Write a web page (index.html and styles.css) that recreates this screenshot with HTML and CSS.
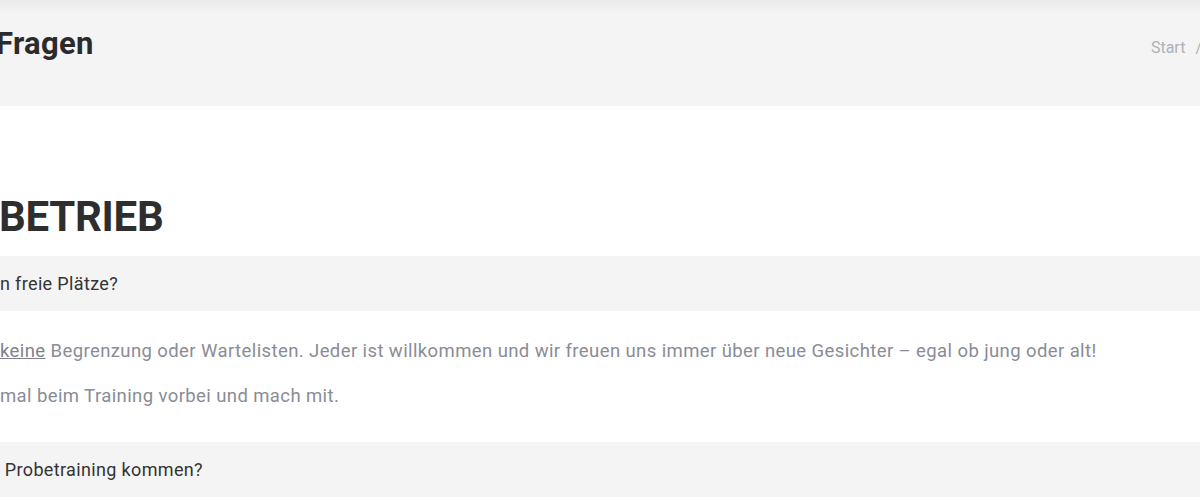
FILE: index.html
```html
<!DOCTYPE html>
<html lang="de">
<head>
<meta charset="utf-8">
<title>Fragen</title>
<link rel="stylesheet" href="styles.css">
</head>
<body>
<header class="page-title">
  <div class="title-inner">
    <h1 class="title">Fragen</h1>
    <nav class="crumbs"><span class="crumb">Start</span><span class="sep">/</span></nav>
  </div>
</header>
<main class="content">
  <h2 class="section">BETRIEB</h2>
  <div class="faq">
    <div class="q">n freie Plätze?</div>
    <div class="a">
      <p><u class="link">keine</u> Begrenzung oder Wartelisten. Jeder ist willkommen und wir freuen uns immer über neue Gesichter – egal ob jung oder alt!</p>
      <p>mal beim Training vorbei und mach mit.</p>
    </div>
    <div class="q q2">&nbsp;Probetraining kommen?</div>
  </div>
</main>
</body>
</html>
```

FILE: styles.css
```css
html, body {
  margin: 0;
  padding: 0;
  background: #fff;
  overflow: hidden;
  font-family: Roboto, "Liberation Sans", sans-serif;
}
.page-title {
  height: 106px;
  background: linear-gradient(#e9e9e9 0, #f4f4f4 14px, #f4f4f4 100%);
}
.title-inner {
  display: flex;
  justify-content: space-between;
  align-items: flex-start;
  height: 100%;
}
.title {
  margin: 26px 0 0 -4px;
  font-size: 31px;
  font-weight: 700;
  letter-spacing: 0.3px;
  color: #2b2b2b;
  line-height: 36px;
}
.crumbs {
  margin: 38px -2px 0 0;
  font-size: 16px;
  color: #adb1b8;
  line-height: 20px;
  display: flex;
  gap: 10px;
}
.content {
  padding-top: 80px;
}
.section {
  margin: 0 0 8px -1px;
  font-size: 42px;
  font-weight: 700;
  letter-spacing: -0.3px;
  color: #2e2e2e;
  line-height: 62px;
}
.q {
  background: #f4f4f4;
  height: 55px;
  line-height: 55px;
  font-size: 18px;
  letter-spacing: 0.35px;
  color: #333;
}
.a {
  padding: 28px 0 34px;
}
.a p {
  margin: 0 0 21px;
  font-size: 18.5px;
  letter-spacing: 0.4px;
  line-height: 24px;
  color: #898c97;
}
.a p:last-child {
  margin-bottom: 0;
}
.link {
  color: #7f828b;
}
```
